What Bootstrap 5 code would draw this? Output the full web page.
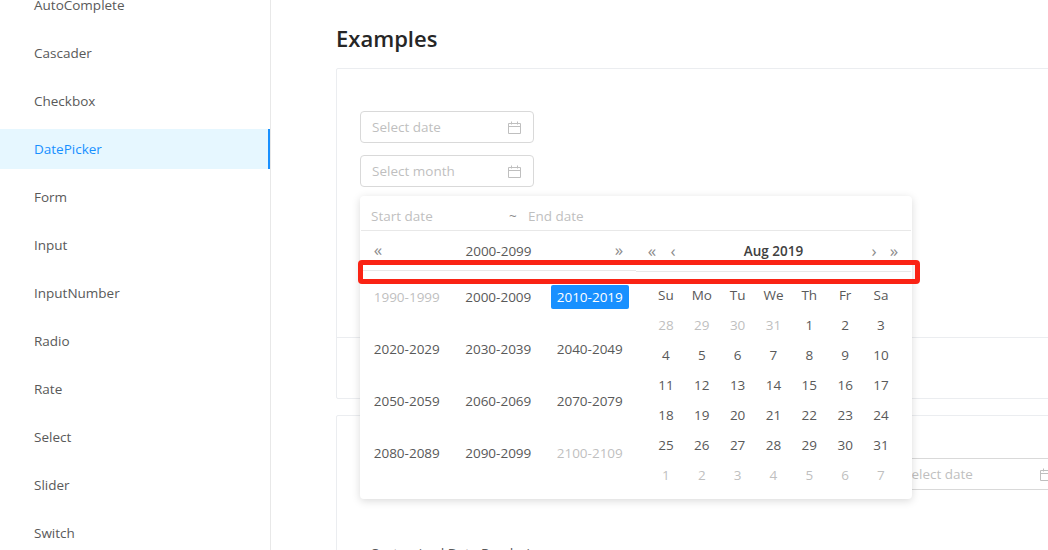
<!DOCTYPE html>
<html lang="en">
  <head>
    <meta charset="UTF-8" />
    <meta name="viewport" content="width=device-width, initial-scale=1" />
    <title>DatePicker</title>
    <link
      href="https://cdn.jsdelivr.net/npm/bootstrap@5.3.0/dist/css/bootstrap.min.css"
      rel="stylesheet"
    />
    <style>
      html, body { height: 550px; overflow: hidden; }
      body {
        background: #fff;
        color: #595959;
        font-family: "Open Sans", "Noto Sans", sans-serif;
        font-size: 13.5px;
        line-height: 20px;
      }
      .page-wrap { width: 1048px; height: 550px; overflow: hidden; position: relative; }
      .side-menu { width: 271px; height: 550px; flex: none; border-right: 1px solid #e8e8e8; overflow: hidden; }
      .side-list { margin-top: -15px; }
      .side-item { height: 40px; line-height: 40px; margin-bottom: 8px; padding-left: 34px; color: #595959; position: relative; }
      .side-item.is-active { background: #e6f7ff; color: #1890ff; }
      .side-item.is-active::after { content: ""; position: absolute; right: -1px; top: 0; bottom: 0; width: 3px; background: #1890ff; }
      .main-col { flex: none; width: 777px; padding: 0 0 0 65px; position: relative; }
      .page-title { font-size: 22px; line-height: 32px; font-weight: 600; color: #262626; margin: 22px 0 14px; }
      .demo-box { width: 760px; border: 1px solid #ebedf0; border-radius: 2px; }
      .demo-one { height: 331px; padding: 42px 23px 0; }
      .demo-two { height: 200px; margin-top: 16px; padding: 42px 0 0 23px; }
      .demo-rule { border-top: 1px solid #ebedf0; position: absolute; left: 65px; width: 760px; top: 337px; }
      .date-input { width: 174px; height: 32px; border: 1px solid #d9d9d9; border-radius: 4px; padding: 0 12px 0 11px; color: #bfbfbf; margin-bottom: 12px; }
      .date-input svg { width: 13px; height: 13px; flex: none; }
      .demo-two .date-input { margin-left: 532px; }
      .demo-note { position: absolute; left: 370px; top: 543px; margin: 0; color: #595959; }
      .range-pop { position: absolute; left: 360px; top: 196px; width: 552px; height: 303px; background: #fff; border-radius: 4px; box-shadow: 0 2px 8px rgba(0, 0, 0, 0.15); }
      .range-top { height: 35px; margin: 0 1px; border-bottom: 1px solid #e8e8e8; color: #bfbfbf; padding-left: 10px; line-height: 40px; }
      .range-top .from-text { width: 138px; }
      .range-top .tilde { width: 19px; color: #8c8c8c; }
      .range-panes { height: 268px; }
      .pane-left { width: 276px; flex: none; }
      .pane-right { width: 275px; flex: none; }
      .pane-head { border-bottom: 1px solid #e8e8e8; align-items: center; height: 40px; }
      .pane-left .pane-head { padding: 0 10px 0 10px; margin-left: 1px; }
      .pane-right .pane-head { height: 41px; padding: 0 10px 0 9px; }
      .arrow-key { color: #8c8c8c; width: 14px; text-align: center; font-size: 17px; padding-bottom: 1px; }
      .gap-key-l { margin-left: 7px; }
      .gap-key-r { margin-right: 6px; }
      .head-title { flex: 1; text-align: center; color: #595959; }
      .pane-right .head-title { font-weight: 600; color: #404040; }
      .decade-grid { display: grid; grid-template-columns: repeat(3, 91.5px); padding-left: 1px; margin-top: 14px; }
      .decade-cell { height: 52px; text-align: center; color: #595959; }
      .decade-cell span { display: inline-block; height: 24px; line-height: 24px; padding: 0 6px; border-radius: 2px; }
      .decade-cell.is-dim { color: #bfbfbf; }
      .decade-cell.is-on span { background: #1890ff; color: #fff; }
      .week-grid { display: grid; grid-template-columns: repeat(7, 35.85px); padding-left: 12px; margin-top: 8px; text-align: center; }
      .week-grid > div { height: 30px; line-height: 30px; }
      .week-grid .is-dim { color: #bfbfbf; }
      .mark-box { position: absolute; left: 358px; top: 260px; width: 562px; height: 24px; border: 5px solid #fa2314; border-radius: 4px; pointer-events: none; }
    </style>
  </head>
  <body>
    <div class="page-wrap d-flex">
      <aside class="side-menu">
        <div class="side-list">
          <div class="side-item">AutoComplete</div>
          <div class="side-item">Cascader</div>
          <div class="side-item">Checkbox</div>
          <div class="side-item is-active">DatePicker</div>
          <div class="side-item">Form</div>
          <div class="side-item">Input</div>
          <div class="side-item">InputNumber</div>
          <div class="side-item">Radio</div>
          <div class="side-item">Rate</div>
          <div class="side-item">Select</div>
          <div class="side-item">Slider</div>
          <div class="side-item">Switch</div>
        </div>
      </aside>

      <main class="main-col">
        <h2 class="page-title">Examples</h2>
        <div class="demo-box demo-one">
          <div class="date-input d-flex align-items-center justify-content-between">
            <span>Select date</span>
            <svg viewBox="0 0 13 13" fill="none" stroke="#bfbfbf"><path d="M.5 2.5h12v10H.5zM.5 5.5h12M3.5 .5v3M9.5 .5v3" /></svg>
          </div>
          <div class="date-input d-flex align-items-center justify-content-between">
            <span>Select month</span>
            <svg viewBox="0 0 13 13" fill="none" stroke="#bfbfbf"><path d="M.5 2.5h12v10H.5zM.5 5.5h12M3.5 .5v3M9.5 .5v3" /></svg>
          </div>
        </div>
        <div class="demo-rule"></div>
        <div class="demo-box demo-two">
          <div class="date-input d-flex align-items-center justify-content-between">
            <span>Select date</span>
            <svg viewBox="0 0 13 13" fill="none" stroke="#bfbfbf"><path d="M.5 2.5h12v10H.5zM.5 5.5h12M3.5 .5v3M9.5 .5v3" /></svg>
          </div>
        </div>
      </main>

      <p class="demo-note">Customized Date Rendering</p>

      <div class="range-pop">
        <div class="range-top d-flex">
          <span class="from-text">Start date</span>
          <span class="tilde">~</span>
          <span>End date</span>
        </div>
        <div class="range-panes d-flex">
          <div class="pane-left">
            <div class="pane-head d-flex">
              <span class="arrow-key">«</span>
              <span class="head-title">2000-2099</span>
              <span class="arrow-key">»</span>
            </div>
            <div class="decade-grid">
              <div class="decade-cell is-dim"><span>1990-1999</span></div>
              <div class="decade-cell"><span>2000-2009</span></div>
              <div class="decade-cell is-on"><span>2010-2019</span></div>
              <div class="decade-cell"><span>2020-2029</span></div>
              <div class="decade-cell"><span>2030-2039</span></div>
              <div class="decade-cell"><span>2040-2049</span></div>
              <div class="decade-cell"><span>2050-2059</span></div>
              <div class="decade-cell"><span>2060-2069</span></div>
              <div class="decade-cell"><span>2070-2079</span></div>
              <div class="decade-cell"><span>2080-2089</span></div>
              <div class="decade-cell"><span>2090-2099</span></div>
              <div class="decade-cell is-dim"><span>2100-2109</span></div>
            </div>
          </div>
          <div class="pane-right">
            <div class="pane-head d-flex">
              <span class="arrow-key">«</span>
              <span class="arrow-key gap-key-l">‹</span>
              <span class="head-title">Aug 2019</span>
              <span class="arrow-key gap-key-r">›</span>
              <span class="arrow-key">»</span>
            </div>
            <div class="week-grid" id="weekGrid"></div>
          </div>
        </div>
      </div>

      <div class="mark-box"></div>
    </div>

    <script>
      document.addEventListener("DOMContentLoaded", () => {
        const grid = document.getElementById("weekGrid");
        const names = ["Su", "Mo", "Tu", "We", "Th", "Fr", "Sa"];
        const days = [28, 29, 30, 31];
        for (let d = 1; d <= 31; d++) days.push(d);
        for (let d = 1; d <= 7; d++) days.push(d);

        names.forEach((n) => {
          const cell = document.createElement("div");
          cell.textContent = n;
          grid.appendChild(cell);
        });
        days.forEach((d, i) => {
          const cell = document.createElement("div");
          cell.textContent = d;
          if (i < 4 || i >= 35) cell.className = "is-dim";
          grid.appendChild(cell);
        });
      });
    </script>

    <script src="https://cdn.jsdelivr.net/npm/bootstrap@5.3.0/dist/js/bootstrap.bundle.min.js"></script>
  </body>
</html>
